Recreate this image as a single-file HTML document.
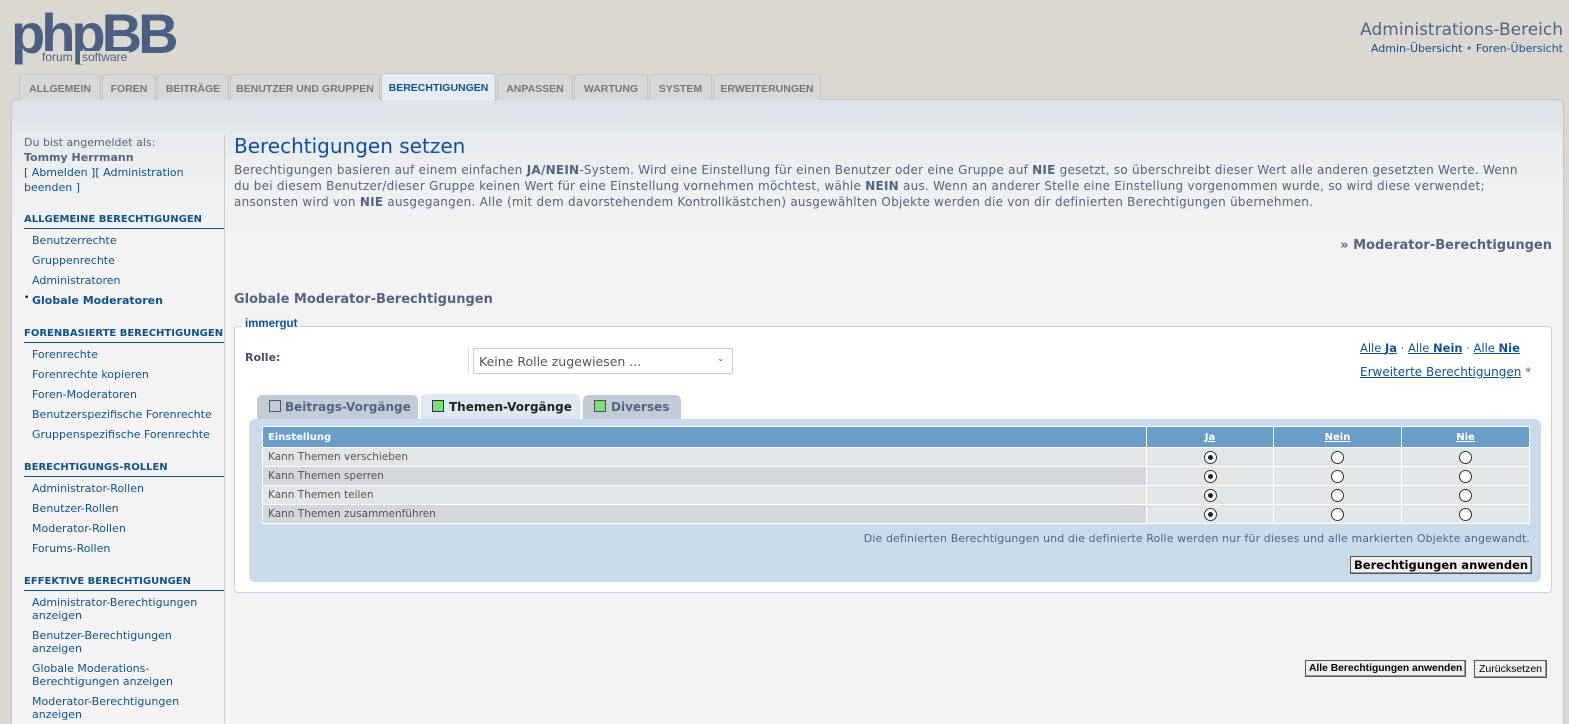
<!DOCTYPE html>
<html><head><meta charset="utf-8"><style>
*{margin:0;padding:0;box-sizing:border-box}
html,body{width:1569px;height:724px;overflow:hidden}
body{background:#dbd8d1;font-family:"DejaVu Sans",Verdana,sans-serif;font-size:11px;color:#536482;position:relative}
.a{position:absolute}
a{color:#105289;text-decoration:none}
.tab{position:absolute;top:74px;height:26px;background:#d8d8d8;border:1px solid #c4c4c4;border-bottom:none;border-radius:4px 4px 0 0;font-family:"Liberation Sans",Arial,sans-serif;font-size:10.5px;font-weight:bold;color:#777;padding-top:8px;text-align:center}
.panel{position:absolute;left:11px;top:99px;width:1553px;height:640px;background:linear-gradient(#dde2e8 0,#eceef0 60px,#f3f3f3 140px);border:1px solid #c4c4c4;border-radius:6px}
.side{position:absolute;left:24px;width:200px}
.sh{position:absolute;left:24px;width:200px;font-size:10px;font-weight:bold;color:#105289;border-bottom:1px solid #105289;padding-bottom:3px;white-space:nowrap;overflow:hidden}
.sl{position:absolute;left:32px;color:#105289}
.radio{display:inline-block;width:13px;height:13px;border:1px solid #333;border-radius:50%;background:#fff;position:relative;vertical-align:middle}
.radio.on::after{content:"";position:absolute;left:3px;top:3px;width:5px;height:5px;border-radius:50%;background:#222}
table{border-collapse:collapse}
td,th{border:1px solid #fff}
.btn{position:absolute;border:1px solid #555;background:#f0f0f0;font-size:11px;font-weight:bold;color:#000;padding:1px 3px;box-shadow:inset -1px -1px #999}
</style></head><body>
<div class="a" style="left:11px;top:6px;font-family:'Liberation Sans',Arial,sans-serif;font-weight:bold;font-size:56px;color:#4a5f82;letter-spacing:-4px;line-height:56px">phpBB</div>
<div class="a" style="left:40px;top:51px;font-family:'Liberation Sans',Arial,sans-serif;font-size:12px;color:#4a5f82;background:#dbd8d1;padding:0 2px;line-height:13px">forum</div>
<div class="a" style="left:80px;top:51px;font-family:'Liberation Sans',Arial,sans-serif;font-size:12px;color:#4a5f82;background:#dbd8d1;padding:0 2px;line-height:13px">software</div>
<div class="a" style="right:6px;top:20px;font-size:17px;color:#536482">Administrations-Bereich</div>
<div class="a" style="right:6px;top:42px;font-size:11px"><a>Admin-Übersicht</a> • <a>Foren-Übersicht</a></div>
<div class="panel"></div>
<div class="tab" style="left:19px;width:82px">ALLGEMEIN</div>
<div class="tab" style="left:102px;width:54px">FOREN</div>
<div class="tab" style="left:157px;width:72px">BEITRÄGE</div>
<div class="tab" style="left:230px;width:150px">BENUTZER UND GRUPPEN</div>
<div class="tab" style="left:381px;width:115px;height:28px;top:73px;background:#e6ecf2;color:#105289">BERECHTIGUNGEN</div>
<div class="tab" style="left:497px;width:76px">ANPASSEN</div>
<div class="tab" style="left:574px;width:74px">WARTUNG</div>
<div class="tab" style="left:649px;width:63px">SYSTEM</div>
<div class="tab" style="left:713px;width:108px">ERWEITERUNGEN</div>
<div class="a" style="left:224px;top:135px;height:600px;border-left:1px solid #ccc"></div>
<div class="side" style="top:135px;line-height:15px">Du bist angemeldet als:<br><b>Tommy Herrmann</b><br><a>[ Abmelden ][ Administration beenden ]</a></div>
<div class="sh" style="top:214px">ALLGEMEINE BERECHTIGUNGEN</div>
<div class="sl" style="top:234px">Benutzerrechte</div><div class="sl" style="top:254px">Gruppenrechte</div><div class="sl" style="top:274px">Administratoren</div><div class="sl" style="top:294px;font-weight:bold">Globale Moderatoren</div>
<div class="a" style="left:24px;top:293px;color:#000;font-size:9px">•</div>
<div class="sh" style="top:328px">FORENBASIERTE BERECHTIGUNGEN</div>
<div class="sl" style="top:348px">Forenrechte</div><div class="sl" style="top:368px">Forenrechte kopieren</div><div class="sl" style="top:388px">Foren-Moderatoren</div><div class="sl" style="top:408px">Benutzerspezifische Forenrechte</div><div class="sl" style="top:428px">Gruppenspezifische Forenrechte</div>
<div class="sh" style="top:462px">BERECHTIGUNGS-ROLLEN</div>
<div class="sl" style="top:482px">Administrator-Rollen</div><div class="sl" style="top:502px">Benutzer-Rollen</div><div class="sl" style="top:522px">Moderator-Rollen</div><div class="sl" style="top:542px">Forums-Rollen</div>
<div class="sh" style="top:576px">EFFEKTIVE BERECHTIGUNGEN</div>
<div class="sl" style="top:596px;line-height:13px;width:180px">Administrator-Berechtigungen anzeigen</div>
<div class="sl" style="top:629px;line-height:13px;width:180px">Benutzer-Berechtigungen anzeigen</div>
<div class="sl" style="top:662px;line-height:13px;width:180px">Globale Moderations-Berechtigungen anzeigen</div>
<div class="sl" style="top:695px;line-height:13px;width:180px">Moderator-Berechtigungen anzeigen</div>

<div class="a" style="left:234px;top:134px;font-size:20px;color:#115098">Berechtigungen setzen</div>
<div class="a" style="left:234px;top:162px;width:1330px;font-size:12px;letter-spacing:0.25px;line-height:16px;color:#536482">Berechtigungen basieren auf einem einfachen <b>JA/NEIN</b>-System. Wird eine Einstellung für einen Benutzer oder eine Gruppe auf <b>NIE</b> gesetzt, so überschreibt dieser Wert alle anderen gesetzten Werte. Wenn<br>du bei diesem Benutzer/dieser Gruppe keinen Wert für eine Einstellung vornehmen möchtest, wähle <b>NEIN</b> aus. Wenn an anderer Stelle eine Einstellung vorgenommen wurde, so wird diese verwendet;<br>ansonsten wird von <b>NIE</b> ausgegangen. Alle (mit dem davorstehendem Kontrollkästchen) ausgewählten Objekte werden die von dir definierten Berechtigungen übernehmen.</div>
<div class="a" style="right:17px;top:238px;font-size:13px;font-weight:bold;color:#536482">» Moderator-Berechtigungen</div>
<div class="a" style="left:234px;top:292px;font-size:13px;font-weight:bold;color:#536482">Globale Moderator-Berechtigungen</div>
<div class="a" style="left:234px;top:326px;width:1318px;height:267px;background:#fff;border:1px solid #ccd3da;border-radius:4px"></div>
<div class="a" style="left:242px;top:318px;background:linear-gradient(#f0f0f0 50%,#fff 50%);padding:0 3px;font-size:11.5px;font-weight:bold;color:#115098;font-family:'Liberation Sans',Arial,sans-serif">immergut</div>
<div class="a" style="left:245px;top:351px;font-weight:bold;color:#425067">Rolle:</div>
<div class="a" style="left:468px;top:348px;height:26px;border-left:1px solid #ddd"></div>
<div class="a" style="left:473px;top:348px;width:260px;height:26px;border:1px solid #ccc;border-radius:2px;background:#fff;font-size:12.5px;color:#555;padding:5px 0 0 5px">Keine Rolle zugewiesen ...<span style="position:absolute;right:8px;top:5px;font-size:8px">⌄</span></div>
<div class="a" style="left:1360px;top:341px;font-size:11.5px"><a style="text-decoration:underline">Alle <b>Ja</b></a> · <a style="text-decoration:underline">Alle <b>Nein</b></a> · <a style="text-decoration:underline">Alle <b>Nie</b></a></div>
<div class="a" style="left:1360px;top:365px;font-size:12px"><a style="text-decoration:underline">Erweiterte Berechtigungen</a> *</div>
<div class="a" style="left:257px;top:395px;width:161px;height:25px;background:#c2ccd6;border-radius:5px 5px 0 0;font-size:12px;font-weight:bold;color:#536482;padding:5px 0 0 12px"><span style="display:inline-block;width:12px;height:12px;border:1px solid #555;background:#c2c9e0;vertical-align:-1px;margin-right:4px"></span>Beitrags-Vorgänge</div>
<div class="a" style="left:421px;top:394px;width:159px;height:26px;background:#dfe9f3;border-radius:5px 5px 0 0;font-size:12px;font-weight:bold;color:#222;padding:6px 0 0 11px"><span style="display:inline-block;width:12px;height:12px;border:1px solid #333;background:#77e077;vertical-align:-1px;margin-right:5px"></span>Themen-Vorgänge</div>
<div class="a" style="left:583px;top:395px;width:98px;height:25px;background:#c2ccd6;border-radius:5px 5px 0 0;font-size:12px;font-weight:bold;color:#536482;padding:5px 0 0 11px"><span style="display:inline-block;width:12px;height:12px;border:1px solid #555;background:#77e077;vertical-align:-1px;margin-right:5px"></span>Diverses</div>
<div class="a" style="left:249px;top:419px;width:1292px;height:163px;background:#cadceb;border-radius:6px"></div>
<table class="a" style="left:262px;top:426px;width:1268px;font-size:10.5px">
<tr style="height:21px;background:#6a9ec8;color:#fff"><th style="text-align:left;padding-left:5px;width:884px;font-size:10px">Einstellung</th><th style="width:127px;font-size:10px"><u>Ja</u></th><th style="width:128px;font-size:10px"><u>Nein</u></th><th style="font-size:10px"><u>Nie</u></th></tr>
<tr style="height:19px;background:#e3e6e9"><td style="padding-left:5px;color:#555">Kann Themen verschieben</td><td align="center"><span class="radio on"></span></td><td align="center"><span class="radio"></span></td><td align="center"><span class="radio"></span></td></tr>
<tr style="height:19px;background:#d4d7db"><td style="padding-left:5px;color:#555">Kann Themen sperren</td><td align="center" style="background:#e3e6e9"><span class="radio on"></span></td><td align="center" style="background:#e3e6e9"><span class="radio"></span></td><td align="center" style="background:#e3e6e9"><span class="radio"></span></td></tr>
<tr style="height:19px;background:#e3e6e9"><td style="padding-left:5px;color:#555">Kann Themen teilen</td><td align="center"><span class="radio on"></span></td><td align="center"><span class="radio"></span></td><td align="center"><span class="radio"></span></td></tr>
<tr style="height:19px;background:#d4d7db"><td style="padding-left:5px;color:#555">Kann Themen zusammenführen</td><td align="center" style="background:#e3e6e9"><span class="radio on"></span></td><td align="center" style="background:#e3e6e9"><span class="radio"></span></td><td align="center" style="background:#e3e6e9"><span class="radio"></span></td></tr>
</table>
<div class="a" style="right:39px;top:532px;font-size:11px;letter-spacing:0.1px;color:#536482">Die definierten Berechtigungen und die definierte Rolle werden nur für dieses und alle markierten Objekte angewandt.</div>
<div class="btn" style="left:1350px;top:556px;font-size:11.5px">Berechtigungen anwenden</div>
<div class="btn" style="left:1305px;top:660px;font-size:10.3px;font-family:'Liberation Sans',Arial,sans-serif;padding:2px 3px">Alle Berechtigungen anwenden</div>
<div class="btn" style="left:1474px;top:660px;font-size:10.5px;font-family:'Liberation Sans',Arial,sans-serif;font-weight:normal;padding:2px 4px">Zurücksetzen</div>
</body></html>
